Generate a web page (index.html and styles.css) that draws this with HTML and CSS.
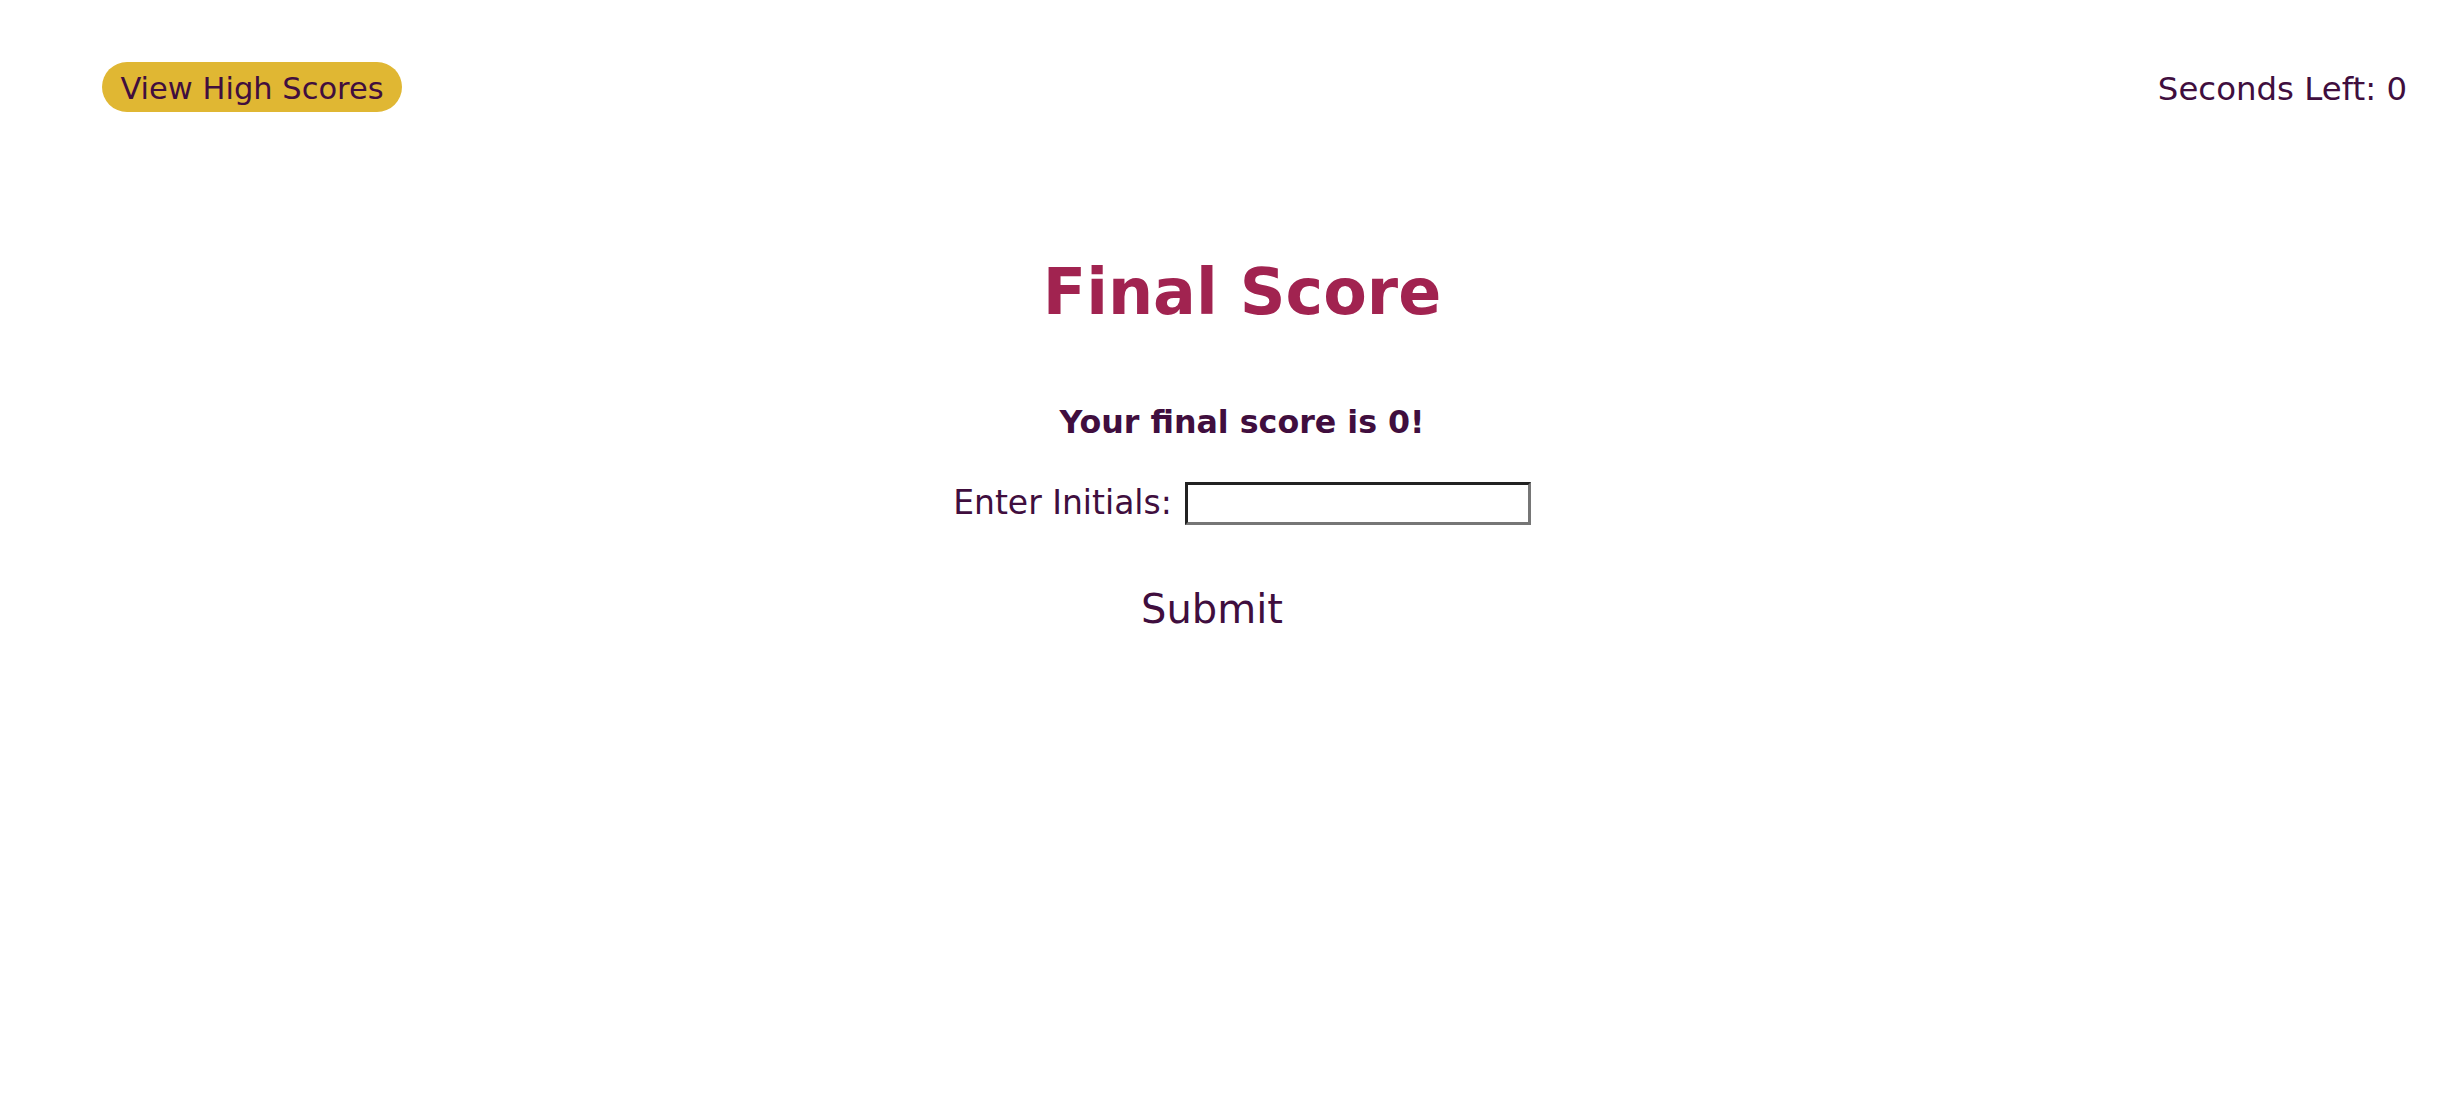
FILE: index.html
```html
<!DOCTYPE html>
<html lang="en">
<head>
<meta charset="utf-8">
<title>Code Quiz</title>
<link rel="stylesheet" href="styles.css">
</head>
<body>
<header class="topbar">
  <button class="hs-btn" type="button">View High Scores</button>
  <div class="timer">Seconds Left: <span>0</span></div>
</header>
<main class="main">
  <h1 class="title">Final Score</h1>
  <p class="score">Your final score is 0!</p>
  <form class="form">
    <div class="row">
      <label class="label" for="initials">Enter Initials:</label>
      <input class="input" id="initials" type="text">
    </div>
    <button class="submit" type="button">Submit</button>
  </form>
</main>
</body>
</html>
```
FILE: styles.css
```css
html, body {
  margin: 0;
  padding: 0;
  background: #ffffff;
}
body {
  font-family: "DejaVu Sans", Verdana, sans-serif;
  color: #400e3e;
}
.topbar {
  display: flex;
  justify-content: space-between;
  align-items: flex-start;
  padding: 62px 56px 0 102px;
}
.hs-btn {
  box-sizing: border-box;
  height: 50px;
  width: 300px;
  padding: 5px 0 0 0;
  border: none;
  border-radius: 25px;
  background: #e0b733;
  color: #400e3e;
  font-family: "DejaVu Sans", Verdana, sans-serif;
  font-size: 30.5px;
  line-height: 1;
  text-align: center;
  display: block;
}
.timer {
  margin-top: 11px;
  font-size: 32.4px;
  line-height: 1;
}
.main {
  display: flex;
  flex-direction: column;
  align-items: center;
  padding-left: 21px;
}
.title {
  margin: 149px 0 0 0;
  font-size: 63.5px;
  line-height: 1;
  font-weight: bold;
  color: #a12350;
}
.score {
  margin: 82px 0 0 0;
  font-size: 31.7px;
  line-height: 1;
  font-weight: bold;
}
.form {
  display: flex;
  flex-direction: column;
  align-items: center;
}
.row {
  display: flex;
  align-items: flex-start;
  gap: 13px;
  margin-top: 44px;
}
.label {
  margin-top: 4px;
  font-size: 33px;
  line-height: 1;
}
.input {
  box-sizing: border-box;
  width: 346px;
  height: 43px;
  margin: 0;
  padding: 0;
  border-style: solid;
  border-width: 3px;
  border-color: #222222 #767676 #767676 #222222;
  background: #fff;
}
.submit {
  margin: 64px 60px 0 0;
  padding: 0;
  border: none;
  background: none;
  color: #400e3e;
  font-family: "DejaVu Sans", Verdana, sans-serif;
  font-size: 40px;
  line-height: 1;
}
```
